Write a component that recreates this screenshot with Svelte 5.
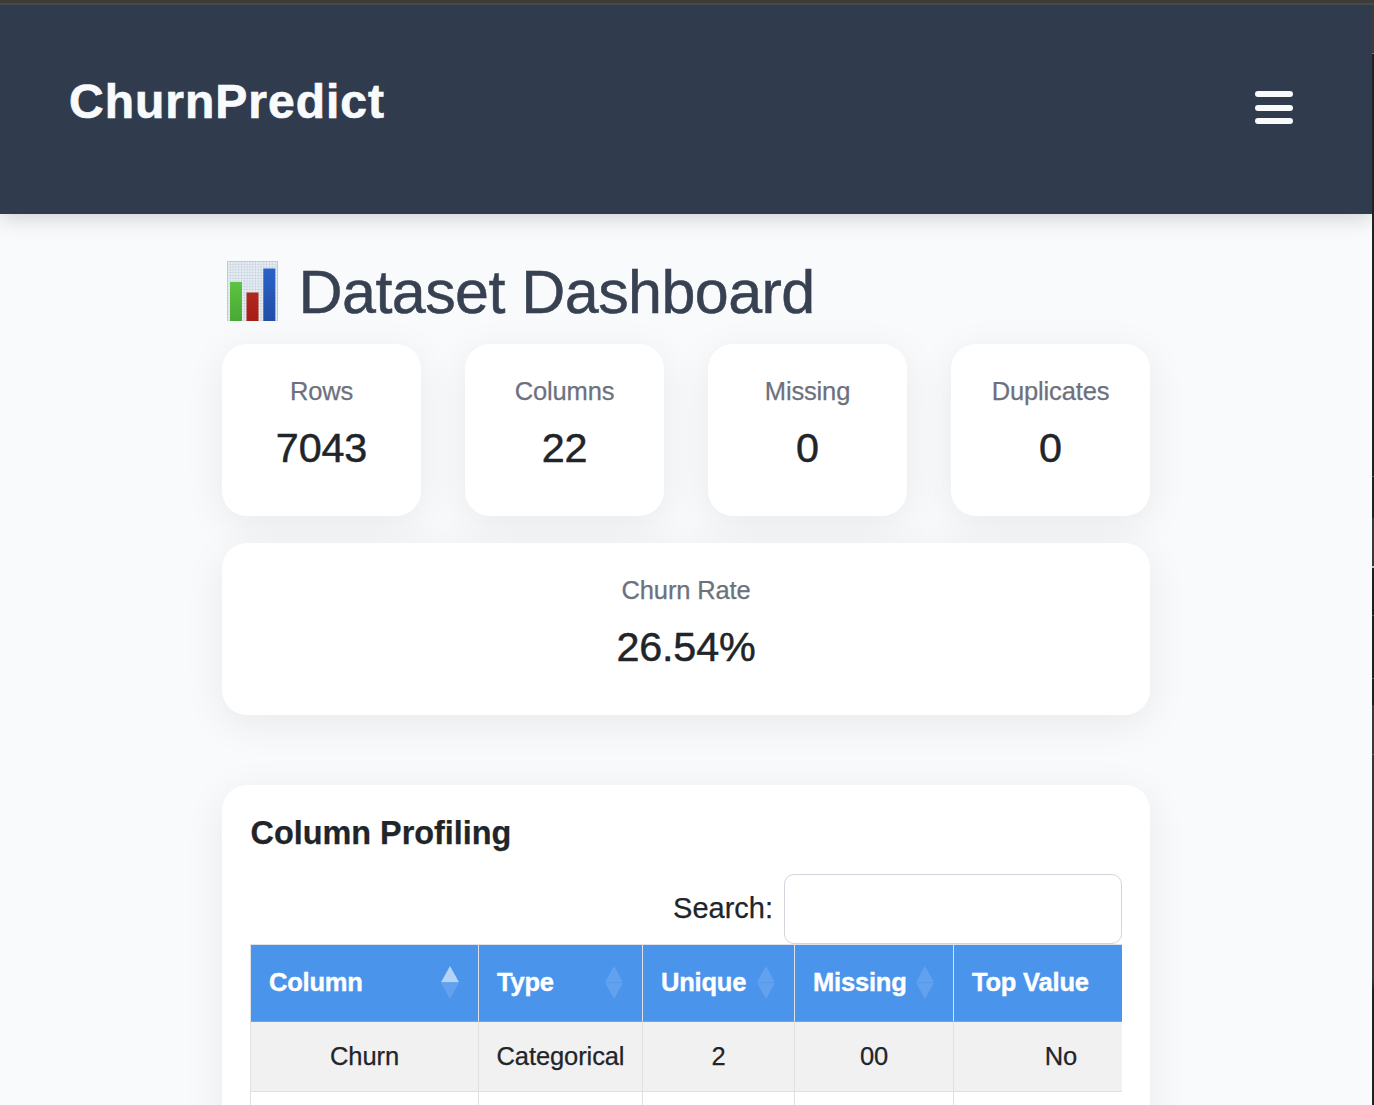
<script>
  const stats = [
    { label: 'Rows', value: '7043' },
    { label: 'Columns', value: '22' },
    { label: 'Missing', value: '0' },
    { label: 'Duplicates', value: '0' }
  ];
  const columns = [
    { name: 'Column', sort: 'asc' },
    { name: 'Type', sort: 'none' },
    { name: 'Unique', sort: 'none' },
    { name: 'Missing', sort: 'none' },
    { name: 'Top Value', sort: 'none' }
  ];
  const rows = [
    ['Churn', 'Categorical', '2', '00', 'No'],
    ['', '', '', '', '']
  ];
</script>

<div class="window">
  <div class="frame-top"></div>
  <div class="page">
    <header>
      <div class="brand">ChurnPredict</div>
      <button class="menu" aria-label="Menu"><span></span><span></span><span></span></button>
    </header>

    <main>
      <h1>
        <svg class="chart" viewBox="0 0 51 60" aria-hidden="true">
          <defs>
            <pattern id="grid" width="2.8" height="2.8" patternUnits="userSpaceOnUse">
              <rect width="2.8" height="2.8" fill="#e9eff5" />
              <path d="M0 .4H2.8M.4 0V2.8" stroke="#c9d4e0" stroke-width=".8" />
            </pattern>
            <linearGradient id="green" x2="0" y2="1"><stop stop-color="#5cc443" /><stop offset="1" stop-color="#4aa832" /></linearGradient>
            <linearGradient id="red" x2="0" y2="1"><stop stop-color="#ae2a1e" /><stop offset="1" stop-color="#a81d14" /></linearGradient>
            <linearGradient id="blue" x2="0" y2="1"><stop stop-color="#2b62c8" /><stop offset="1" stop-color="#204da6" /></linearGradient>
          </defs>
          <rect width="51" height="60" fill="url(#grid)" />
          <path d="M.5 60V.5H50.5V60" fill="none" stroke="#c3c9d1" />
          <rect x="3" y="21" width="12" height="39" fill="url(#green)" />
          <rect x="19.5" y="31.5" width="12" height="28.5" fill="url(#red)" />
          <rect x="36.3" y="7.5" width="12" height="52.5" fill="url(#blue)" />
        </svg>
        <span>Dataset Dashboard</span>
      </h1>

      <section class="stats">
        {#each stats as s}
          <div class="card stat">
            <div class="label">{s.label}</div>
            <div class="value">{s.value}</div>
          </div>
        {/each}
        <div class="card stat wide">
          <div class="label">Churn Rate</div>
          <div class="value">26.54%</div>
        </div>
      </section>

      <section class="card profiling">
        <h2>Column Profiling</h2>
        <label class="search"><span>Search:</span><input type="search" /></label>
        <div class="scroller">
          <table>
            <colgroup><col class="c1" /><col class="c2" /><col class="c3" /><col class="c4" /><col class="c5" /></colgroup>
            <thead>
              <tr>
                {#each columns as c}
                  <th>
                    <div class="head">
                      <span>{c.name}</span>
                      <svg class="sort" class:asc={c.sort === 'asc'} viewBox="0 0 18 33" aria-hidden="true">
                        <path class="up" d="M9 0L18 16.3H0Z" />
                        <path class="down" d="M0 16.7H18L9 33Z" />
                      </svg>
                    </div>
                  </th>
                {/each}
              </tr>
            </thead>
            <tbody>
              {#each rows as row}
                <tr>{#each row as cell}<td>{cell}</td>{/each}</tr>
              {/each}
            </tbody>
          </table>
        </div>
      </section>
    </main>
  </div>
  <div class="frame-side"></div>
</div>

<style>
  :global(body) { overflow: hidden; }
  .window {
    display: grid;
    grid-template-columns: 1372px 2px;
    grid-template-rows: 5px 1100px;
    width: 1374px;
    height: 1105px;
    overflow: hidden;
    color: #212529;
    font-family: 'Liberation Sans', Arial, sans-serif;
    -webkit-text-stroke-width: 0.25px;
  }
  .frame-top {
    grid-column: 1 / 3;
    background: #3c3c39;
    border-bottom: 2px solid #47494b;
    box-sizing: border-box;
  }
  .frame-side {
    background: linear-gradient(#3c3c3c 48px, #777 48px 49px, #202121 49px 471px, #555 471px 472px, #202121 472px 513px, #3a3a3a 513px 561px, #b9c6d6 561px 563px, #1c1e22 563px 610px, #555 610px 611px, #1f2020 611px 673px, #555 673px 674px, #1f2020 674px 700px, #3a3a3a 700px 749px, #666 749px 750px, #373737 750px 975px, #202121 985px);
  }
  .page { background: #f9fafc; overflow: hidden; }
  header {
    display: flex;
    justify-content: space-between;
    height: 209px;
    box-sizing: border-box;
    padding: 67px 79px 0 69px;
    background: #303c4e;
    box-shadow: 0 4px 20px rgba(0, 0, 0, 0.17);
  }
  .brand {
    height: 60px;
    line-height: 60px;
    color: #f8fafc;
    font-size: 48px;
    font-weight: 700;
    letter-spacing: 1px;
    -webkit-text-stroke-width: 0.7px;
  }
  .menu {
    display: flex;
    flex-direction: column;
    justify-content: space-between;
    width: 38px;
    height: 33px;
    margin: 19px 0 0;
    padding: 0;
    border: 0;
    background: none;
  }
  .menu span { height: 6px; border-radius: 3px; background: #f8fafc; }
  main { width: 928px; margin-left: 222px; }
  h1 {
    display: flex;
    align-items: flex-start;
    gap: 21px;
    height: 130px;
    margin: 0;
    padding: 47px 0 0 4.5px;
    box-sizing: border-box;
    color: #374151;
    font-size: 61px;
    font-weight: 400;
    line-height: 60px;
    letter-spacing: -0.55px;
    -webkit-text-stroke-width: 0.5px;
  }
  h1 span { padding-top: 1px; white-space: nowrap; }
  .chart { width: 51px; height: 60px; }
  .card {
    background: #fff;
    border-radius: 25px;
    box-shadow: 0 9px 42px rgba(0, 0, 0, 0.07);
  }
  .stats { display: grid; grid-template-columns: repeat(4, 199px); gap: 27px 44px; }
  .stat { height: 172px; box-sizing: border-box; padding-top: 28px; text-align: center; }
  .wide { grid-column: 1 / 5; }
  .label { height: 38px; line-height: 38px; color: #6c717d; font-size: 25.5px; letter-spacing: -0.15px; }
  .value { height: 50px; margin-top: 13px; line-height: 50px; font-size: 41.3px; letter-spacing: -0.15px; -webkit-text-stroke-width: 0.5px; }
  .profiling { height: 500px; margin-top: 70px; padding: 28px; box-sizing: border-box; }
  h2 { height: 40px; margin: 0; padding-left: 0.5px; line-height: 40px; font-size: 32.4px; font-weight: 700; }
  .search {
    display: flex;
    align-items: center;
    justify-content: flex-end;
    gap: 11px;
    height: 70px;
    margin-top: 21px;
    font-size: 29px;
  }
  .search span { padding-bottom: 2px; }
  input {
    width: 338px;
    height: 70px;
    box-sizing: border-box;
    border: 1px solid #d1d5db;
    border-radius: 10px;
    background: #fff;
  }
  .scroller { width: 872px; overflow: hidden; }
  table {
    width: 919px;
    table-layout: fixed;
    border-collapse: separate;
    border-spacing: 0;
    border-left: 1px solid #dee2e6;
    border-top: 1px solid #dee2e6;
    font-size: 25.5px;
    letter-spacing: -0.1px;
  }
  .c1 { width: 228px; }
  .c2 { width: 164px; }
  .c3 { width: 152px; }
  .c4 { width: 159px; }
  .c5 { width: 215px; }
  th, td { box-sizing: border-box; border-right: 1px solid #dee2e6; white-space: nowrap; }
  th {
    height: 77px;
    padding: 0 19px 2px 18px;
    border-bottom: 1px solid #8d9fb8;
    background: #4a94ec;
    color: #fff;
    font-weight: 700;
    letter-spacing: -0.2px;
    -webkit-text-stroke-width: 0.4px;
  }
  .head { display: flex; align-items: center; justify-content: space-between; }
  .sort { flex: none; width: 18px; height: 33px; fill: #fff; }
  .up, .down { opacity: 0.13; }
  .asc .up { opacity: 0.6; }
  td { height: 70px; padding: 0; border-bottom: 1px solid #dee2e6; text-align: center; }
  tbody tr:nth-child(odd) td { background: #f1f1f2; }
</style>
